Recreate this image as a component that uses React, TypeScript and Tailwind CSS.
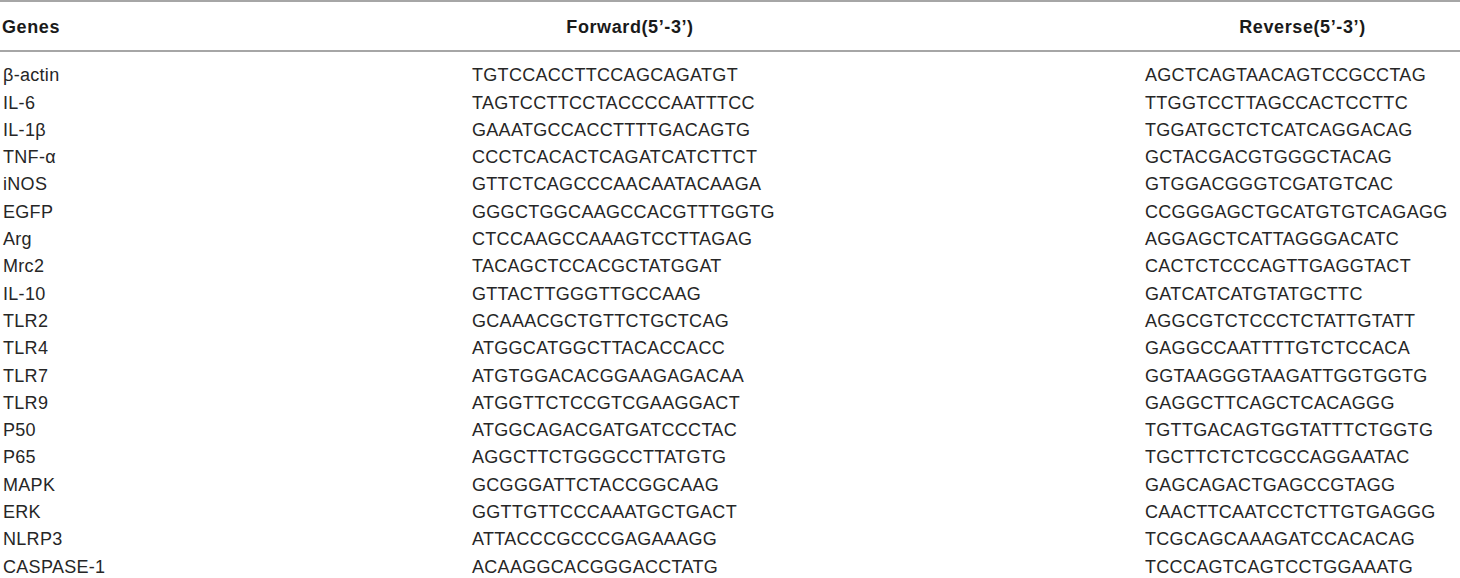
const rows: [string, string, string][] = [
  ['β-actin', 'TGTCCACCTTCCAGCAGATGT', 'AGCTCAGTAACAGTCCGCCTAG'],
  ['IL-6', 'TAGTCCTTCCTACCCCAATTTCC', 'TTGGTCCTTAGCCACTCCTTC'],
  ['IL-1β', 'GAAATGCCACCTTTTGACAGTG', 'TGGATGCTCTCATCAGGACAG'],
  ['TNF-α', 'CCCTCACACTCAGATCATCTTCT', 'GCTACGACGTGGGCTACAG'],
  ['iNOS', 'GTTCTCAGCCCAACAATACAAGA', 'GTGGACGGGTCGATGTCAC'],
  ['EGFP', 'GGGCTGGCAAGCCACGTTTGGTG', 'CCGGGAGCTGCATGTGTCAGAGG'],
  ['Arg', 'CTCCAAGCCAAAGTCCTTAGAG', 'AGGAGCTCATTAGGGACATC'],
  ['Mrc2', 'TACAGCTCCACGCTATGGAT', 'CACTCTCCCAGTTGAGGTACT'],
  ['IL-10', 'GTTACTTGGGTTGCCAAG', 'GATCATCATGTATGCTTC'],
  ['TLR2', 'GCAAACGCTGTTCTGCTCAG', 'AGGCGTCTCCCTCTATTGTATT'],
  ['TLR4', 'ATGGCATGGCTTACACCACC', 'GAGGCCAATTTTGTCTCCACA'],
  ['TLR7', 'ATGTGGACACGGAAGAGACAA', 'GGTAAGGGTAAGATTGGTGGTG'],
  ['TLR9', 'ATGGTTCTCCGTCGAAGGACT', 'GAGGCTTCAGCTCACAGGG'],
  ['P50', 'ATGGCAGACGATGATCCCTAC', 'TGTTGACAGTGGTATTTCTGGTG'],
  ['P65', 'AGGCTTCTGGGCCTTATGTG', 'TGCTTCTCTCGCCAGGAATAC'],
  ['MAPK', 'GCGGGATTCTACCGGCAAG', 'GAGCAGACTGAGCCGTAGG'],
  ['ERK', 'GGTTGTTCCCAAATGCTGACT', 'CAACTTCAATCCTCTTGTGAGGG'],
  ['NLRP3', 'ATTACCCGCCCGAGAAAGG', 'TCGCAGCAAAGATCCACACAG'],
  ['CASPASE-1', 'ACAAGGCACGGGACCTATG', 'TCCCAGTCAGTCCTGGAAATG'],
];

export default function App() {
  return (
    <div className="w-[1460px] h-[578px] overflow-hidden bg-white font-['Liberation_Sans',Arial,sans-serif] text-[18px] leading-[27.3px]">
      <div className="border-t-2 border-b-2 border-[#a6a6a6] pt-[11.7px] pb-[9px]">
        <div className="grid grid-cols-[472px_316px_1fr_315px] font-bold text-[#1a1a1a] tracking-[0.6px]">
          <div className="pl-[2px]">Genes</div>
          <div className="text-center">Forward(5’-3’)</div>
          <div />
          <div className="text-center">Reverse(5’-3’)</div>
        </div>
      </div>
      <div className="pt-[10.3px] text-[#262626] tracking-[0.3px]">
        {rows.map(([gene, fwd, rev]) => (
          <div key={gene} className="grid grid-cols-[472px_316px_1fr_315px]">
            <div className="pl-[3px]">{gene}</div>
            <div className="whitespace-nowrap">{fwd}</div>
            <div />
            <div className="whitespace-nowrap">{rev}</div>
          </div>
        ))}
      </div>
    </div>
  );
}
